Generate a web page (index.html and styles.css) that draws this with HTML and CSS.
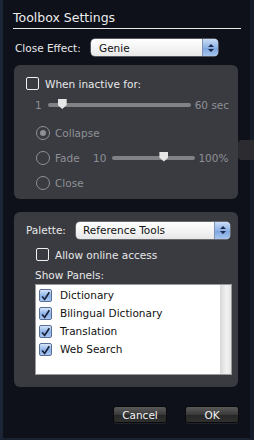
FILE: index.html
```html
<!DOCTYPE html>
<html>
<head>
<meta charset="utf-8">
<link rel="stylesheet" href="styles.css">
</head>
<body>
<div class="win">
  <div class="title">Toolbox Settings</div>
  <div class="rule"></div>
  <div class="row effect">
    <span class="lbl">Close Effect:</span>
    <div class="popup p1"><span>Genie</span><span class="step"><svg width="6" height="10" viewBox="0 0 6 10"><path d="M0 4 L3 1 L6 4Z M0 6 L3 9 L6 6Z" fill="#1b2a4a"/></svg></span></div>
  </div>

  <div class="panel panel1">
    <div class="row chkrow">
      <span class="cb"></span><span class="txt">When inactive for:</span>
    </div>
    <div class="row slrow">
      <span class="dim">1</span>
      <div class="track t1"><span class="thumb" style="left:10px"></span></div>
      <span class="dim">60 sec</span>
    </div>
    <div class="radios">
      <div class="row rad"><span class="rb on"></span><span class="dim">Collapse</span></div>
      <div class="row rad"><span class="rb"></span><span class="dim fade">Fade</span><span class="dim">10</span>
        <div class="track t2"><span class="thumb" style="left:47px"></span></div><span class="dim">100%</span></div>
      <div class="row rad"><span class="rb"></span><span class="dim">Close</span></div>
    </div>
  </div>

  <div class="panel panel2">
    <div class="row pal">
      <span class="lbl">Palette:</span>
      <div class="popup p2"><span>Reference Tools</span><span class="step"><svg width="6" height="10" viewBox="0 0 6 10"><path d="M0 4 L3 1 L6 4Z M0 6 L3 9 L6 6Z" fill="#1b2a4a"/></svg></span></div>
    </div>
    <div class="row online"><span class="cb"></span><span class="txt">Allow online access</span></div>
    <div class="showlbl">Show Panels:</div>
    <div class="list">
      <div class="items">
        <div class="item"><span class="ck"><svg width="13" height="13" viewBox="0 0 13 13"><path d="M2.5 6.5 L5.5 10 L11 1.5" fill="none" stroke="#1a2236" stroke-width="2"/></svg></span>Dictionary</div>
        <div class="item"><span class="ck"><svg width="13" height="13" viewBox="0 0 13 13"><path d="M2.5 6.5 L5.5 10 L11 1.5" fill="none" stroke="#1a2236" stroke-width="2"/></svg></span>Bilingual Dictionary</div>
        <div class="item"><span class="ck"><svg width="13" height="13" viewBox="0 0 13 13"><path d="M2.5 6.5 L5.5 10 L11 1.5" fill="none" stroke="#1a2236" stroke-width="2"/></svg></span>Translation</div>
        <div class="item"><span class="ck"><svg width="13" height="13" viewBox="0 0 13 13"><path d="M2.5 6.5 L5.5 10 L11 1.5" fill="none" stroke="#1a2236" stroke-width="2"/></svg></span>Web Search</div>
      </div>
      <div class="scroll"></div>
    </div>
  </div>

  <div class="buttons">
    <button class="btn">Cancel</button>
    <button class="btn">OK</button>
  </div>
  <div class="tab"></div>
</div>
</body>
</html>
```
FILE: styles.css
```css
html, body { margin: 0; padding: 0; }
body {
  width: 254px; height: 440px; overflow: hidden;
  background: #0e111a;
  font-family: "DejaVu Sans", "Liberation Sans", sans-serif;
  font-size: 10.5px;
  color: #e8e8e8;
}
.win {
  position: relative;
  width: 254px; height: 440px; box-sizing: border-box;
  border-left: 3px solid #1d2636;
  border-right: 4px solid #161d2a;
  border-bottom: 2px solid #1a2232;
  padding-top: 10px;
}
.title {
  font-size: 12.5px; line-height: 15px;
  padding-left: 10px; color: #ececec;
}
.rule { height: 1px; background: #e8e8e8; margin: 3px 9px 0 10px; }
.row { display: flex; align-items: center; }
.effect { margin-top: 10px; padding-left: 12px; height: 17px; }
.effect .lbl { width: 76px; }
.popup {
  height: 17px; box-sizing: border-box;
  background: linear-gradient(#ffffff, #f2f2f2 60%, #e6e6e6);
  border-radius: 4px; color: #111;
  display: flex; align-items: center; justify-content: space-between;
  padding-left: 8px; overflow: hidden;
  box-shadow: 0 0 0 0.5px #999;
}
.p1 { width: 127px; }
.p2 { width: 154px; padding-left: 7px; }
.step {
  width: 15px; height: 17px;
  background: linear-gradient(#c9dcf5, #8fb3e6 50%, #7aa3de 51%, #a8c6ee);
  display: flex; align-items: center; justify-content: center;
  border-left: 1px solid #7c93b5;
}
.panel {
  margin-left: 11px; width: 224px; box-sizing: border-box;
  background: #393b41; border-radius: 6px;
}
.panel1 { margin-top: 9px; height: 134px; padding: 12px 0 0 12px; }
.cb {
  width: 13px; height: 13px; box-sizing: border-box;
  border: 1.5px solid #f0f0f0; border-radius: 2px; flex: none;
}
.chkrow .txt { margin-left: 6px; }
.dim { color: #8e9095; }
.slrow { margin-top: 9px; padding-left: 9px; height: 12px; }
.track {
  position: relative; height: 4px; border-radius: 2px;
  background: #808285; margin: 0 4px 0 6px;
}
.t1 { width: 143px; }
.t2 { width: 83px; margin-left: 6px; margin-right: 3px; }
.thumb {
  position: absolute; top: -4px; width: 9px; height: 10px;
  background: #e6e6e6;
  clip-path: polygon(0 0, 100% 0, 100% 60%, 50% 100%, 0 60%);
}
.radios { margin-top: 14px; padding-left: 10px; display: flex; flex-direction: column; gap: 10px; }
.rad { height: 15px; }
.rb {
  width: 14px; height: 14px; box-sizing: border-box; border-radius: 50%;
  border: 1.5px solid #8e9095; margin-right: 5px; flex: none;
  display: flex; align-items: center; justify-content: center;
}
.rb.on::after { content: ""; width: 6px; height: 6px; border-radius: 50%; background: #8e9095; }
.fade { width: 38px; }
.panel2 { margin-top: 13px; height: 175px; padding: 10px 0 0 12px; }
.pal .lbl { width: 50px; }
.pal { height: 16px; }
.online { margin-top: 10px; padding-left: 10px; }
.online .txt { margin-left: 6px; }
.showlbl { margin-top: 7px; padding-left: 9px; line-height: 14px; }
.list {
  margin: 2px 0 0 9px; width: 197px; height: 91px;
  background: #fff; display: flex; box-shadow: inset 0 0 0 1px #9a9a9a;
}
.items { flex: 1; padding: 2px 0 0 4px; color: #111; }
.item { display: flex; align-items: center; height: 18px; }
.ck {
  width: 13px; height: 13px; box-sizing: border-box; margin-right: 8px;
  border: 1px solid #5a6f96; border-radius: 2px;
  background: linear-gradient(#d5e5fa, #8bb1e8 55%, #a6c6f1);
  display: flex;
}
.scroll { width: 11px; margin: 1px 1px 1px 0; background: linear-gradient(90deg, #d8d8d8, #f2f2f2 60%, #e4e4e4); }
.buttons { display: flex; justify-content: flex-end; gap: 18px; margin: 19px 11px 0 0; }
.btn {
  width: 54px; height: 17px; padding: 0;
  font-family: "DejaVu Sans", "Liberation Sans", sans-serif; font-size: 10.5px;
  color: #f4f4f4; border: 1px solid #0a0a0a; border-radius: 3px;
  background: linear-gradient(#5a5a5a, #3a3a3a 50%, #262626 51%, #303030);
  box-shadow: 0 1px 0 rgba(255,255,255,0.08);
}
.tab {
  position: absolute; right: -4px; top: 140px; width: 16px; height: 20px;
  background: #2c2c30; border-radius: 4px 0 0 4px;
}
```
